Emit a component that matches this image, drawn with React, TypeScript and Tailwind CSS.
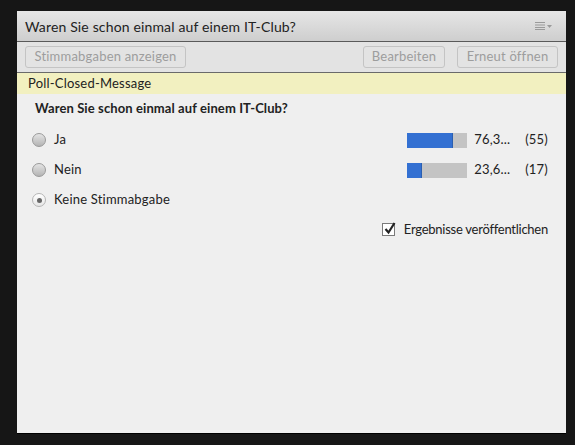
import React from 'react';

const font = { fontFamily: '"Lato", "Open Sans", sans-serif' };

function Radio({ checked }: { checked?: boolean }) {
  if (checked) {
    return (
      <span className="flex h-[14px] w-[14px] items-center justify-center rounded-full border border-[#b5b5b5] bg-gradient-to-b from-[#ffffff] to-[#e6e6e6]">
        <span className="h-[5px] w-[5px] rounded-full bg-[#666]" />
      </span>
    );
  }
  return <span className="h-[14px] w-[14px] rounded-full border border-[#9a9a9a] bg-gradient-to-b from-[#e4e4e4] to-[#b4b4b4]" />;
}

function Bar({ pct, label, count }: { pct: number; label: string; count: string }) {
  return (
    <div className="flex items-center">
      <div className="h-[15px] w-[60px] bg-[#c4c4c4]">
        <div className="h-full bg-[#3370d2] border-r border-[#2b5fb0]" style={{ width: `${pct}%` }} />
      </div>
      <span className="ml-[7px] w-[40px] text-[13px] tracking-[0.2px] text-[#222]">{label}</span>
      <span className="ml-[11px] text-[13px] tracking-[0.2px] text-[#222]">{count}</span>
    </div>
  );
}

const rows = [
  { label: 'Ja', pct: 76, value: '76,3...', count: '(55)' },
  { label: 'Nein', pct: 24, value: '23,6...', count: '(17)' },
];

export default function App() {
  return (
    <div className="h-[445px] w-[575px] overflow-hidden bg-[#161616] pt-[11px] pl-[17px]" style={font}>
      <div className="flex h-[423px] w-[549px] flex-col bg-[#efefef] border-b border-black">
        <div className="flex h-[31px] items-center justify-between border-b border-[#5a5a5a] bg-gradient-to-b from-[#e6e6e6] to-[#cecece] pl-[8px] pr-[14px]">
          <span className="text-[14px] tracking-[0.15px] text-[#222]">Waren Sie schon einmal auf einem IT-Club?</span>
          <span className="flex items-center gap-[2px]">
            <svg width="10" height="8" viewBox="0 0 10 8">
              <rect x="0" y="0" width="10" height="1" fill="#9a9a9a" />
              <rect x="0" y="2.5" width="10" height="1" fill="#9a9a9a" />
              <rect x="0" y="5" width="10" height="1" fill="#9a9a9a" />
              <rect x="0" y="7" width="10" height="1" fill="#9a9a9a" />
            </svg>
            <svg width="5" height="3" viewBox="0 0 5 3">
              <path d="M0 0 H5 L2.5 3 Z" fill="#9a9a9a" />
            </svg>
          </span>
        </div>
        <div className="flex h-[31px] items-center justify-between border-b border-[#6a6a6a] bg-[#e3e3e3] pl-[8px] pr-[8px]">
          <button className="h-[22px] w-[161px] rounded-[3px] border border-[#c4c4c4] text-[13px] tracking-[0.2px] text-[#9d9d9d]">
            Stimmabgaben anzeigen
          </button>
          <div className="flex gap-[12px]">
            <button className="h-[22px] w-[82px] rounded-[3px] border border-[#c4c4c4] text-[13px] tracking-[0.2px] text-[#9d9d9d]">
              Bearbeiten
            </button>
            <button className="h-[22px] w-[101px] rounded-[3px] border border-[#c4c4c4] text-[13px] tracking-[0.2px] text-[#9d9d9d]">
              Erneut öffnen
            </button>
          </div>
        </div>
        <div className="flex h-[21px] items-center bg-[#f2f0c0] pl-[11px] text-[13px] tracking-[0.2px] text-[#222]">
          Poll-Closed-Message
        </div>
        <div className="flex flex-col pl-[15px] pr-[18px] pt-[5px]">
          <div className="pl-[3px] text-[13px] font-bold tracking-[0.1px] text-[#222]">Waren Sie schon einmal auf einem IT-Club?</div>
          <div className="mt-[14px] flex flex-col gap-[15px]">
            {rows.map((r) => (
              <div key={r.label} className="flex h-[15px] items-center justify-between">
                <div className="flex items-center gap-[8px]">
                  <Radio />
                  <span className="text-[13px] tracking-[0.2px] text-[#222]">{r.label}</span>
                </div>
                <Bar pct={r.pct} label={r.value} count={r.count} />
              </div>
            ))}
            <div className="flex h-[15px] items-center gap-[8px]">
              <Radio checked />
              <span className="text-[13px] tracking-[0.2px] text-[#222]">Keine Stimmabgabe</span>
            </div>
          </div>
          <div className="mt-[12px] flex items-center justify-end gap-[9px]">
            <span className="relative h-[13px] w-[13px] border border-[#7a7a7a] bg-white">
              <svg className="absolute -top-[2px] left-[1px]" width="12" height="13" viewBox="0 0 12 13">
                <path d="M1.5 7 L4.5 10.5 L10.5 1" stroke="#222" strokeWidth="2.2" fill="none" />
              </svg>
            </span>
            <span className="text-[13px] tracking-[-0.25px] text-[#222]">Ergebnisse veröffentlichen</span>
          </div>
        </div>
      </div>
    </div>
  );
}
